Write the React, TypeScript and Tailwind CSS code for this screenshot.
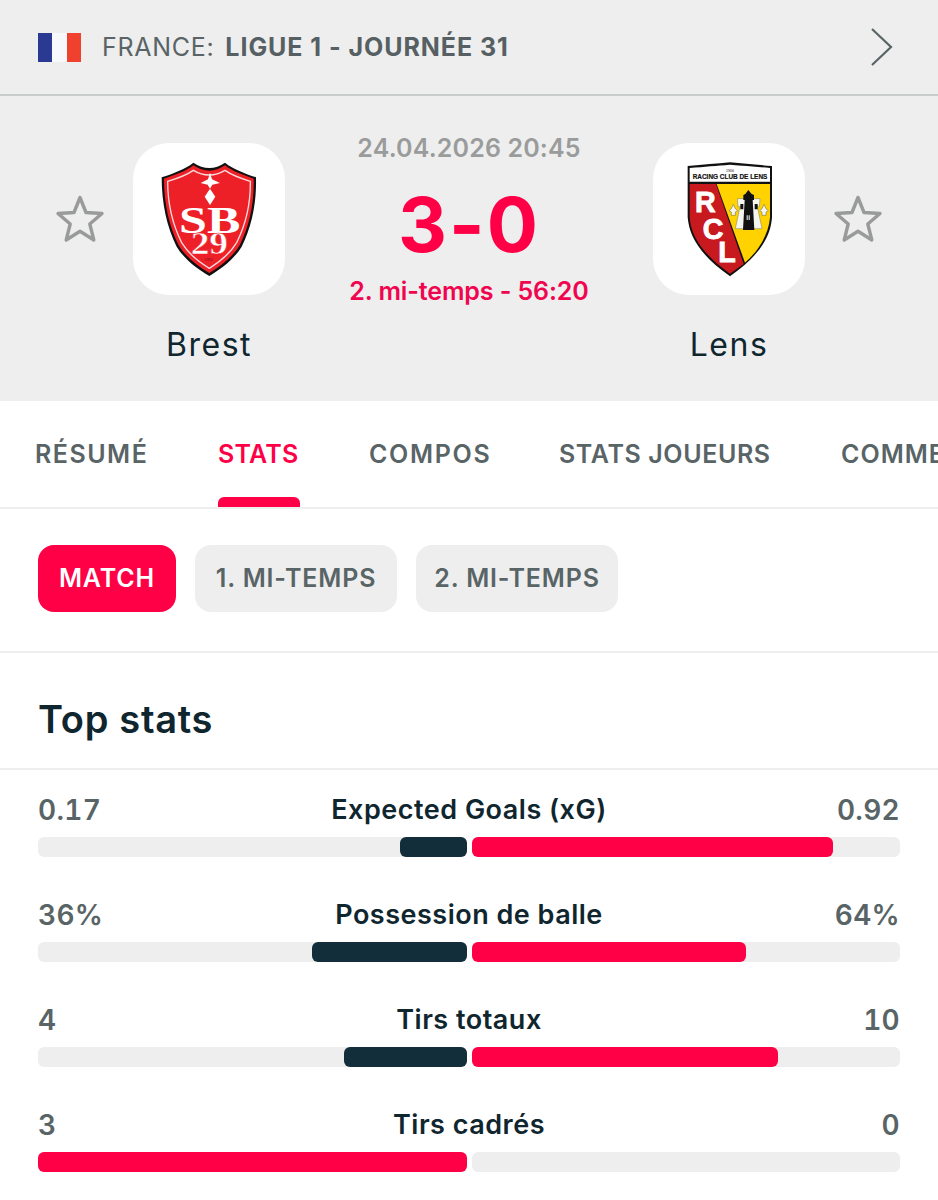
import React, { FC } from "react";

type Stat = {
  label: string;
  left: string;
  right: string;
  leftPct: number;
  rightPct: number;
  leftColor: string;
};

const stats: Stat[] = [
  { label: "Expected Goals (xG)", left: "0.17", right: "0.92", leftPct: 15.6, rightPct: 84.4, leftColor: "bg-[#122e3a]" },
  { label: "Possession de balle", left: "36%", right: "64%", leftPct: 36, rightPct: 64, leftColor: "bg-[#122e3a]" },
  { label: "Tirs totaux", left: "4", right: "10", leftPct: 28.5, rightPct: 71.5, leftColor: "bg-[#122e3a]" },
  { label: "Tirs cadrés", left: "3", right: "0", leftPct: 100, rightPct: 0, leftColor: "bg-[#ff0046]" },
];

const tabs = [
  { name: "RÉSUMÉ", cls: "w-[113px] mr-[70px] tracking-[1.5px] text-[#596466]" },
  { name: "STATS", cls: "w-[82px] mr-[69px] tracking-[0.2px] text-[#ff0046]" },
  { name: "COMPOS", cls: "w-[122px] mr-[68px] tracking-[1.7px] text-[#596466]" },
  { name: "STATS JOUEURS", cls: "w-[212px] mr-[70px] tracking-[0.6px] text-[#596466]" },
  { name: "COMMENTAIRES", cls: "tracking-[1px] text-[#596466]" },
];

const Star: FC = () => (
  <svg width="50" height="50" viewBox="0 0 50 50" fill="none" className="shrink-0">
    <path
      d="M25 3.5 L31 18.5 L47 19.5 L34.8 30 L38.8 46 L25 37.2 L11.2 46 L15.2 30 L3 19.5 L19 18.5 Z"
      stroke="#999b9b"
      strokeWidth="3.4"
      strokeLinejoin="round"
    />
  </svg>
);

const BrestLogo: FC = () => (
  <svg width="152" height="152" viewBox="9 9 456 456">
    <path
      d="M95 112 C130 100 165 88 190 68 C205 78 222 84 238 84 C254 84 270 78 285 68 C310 88 345 100 378 112 C380 190 365 260 335 320 C310 360 275 385 238 408 C200 385 165 360 140 320 C110 260 95 190 95 112 Z"
      fill="#111"
    />
    <path
      d="M102 116 C135 105 168 94 190 76 C205 86 222 92 238 92 C254 92 270 86 285 76 C307 94 340 105 371 116 C373 190 358 258 329 316 C305 354 272 378 238 399 C203 378 170 354 146 316 C117 258 102 190 102 116 Z"
      fill="#ee2027"
    />
    <path
      d="M113 124 C140 116 170 105 190 91 C205 100 222 105 238 105 C254 105 270 100 285 91 C305 105 335 116 361 124 C362 190 348 252 320 308 C298 345 268 366 238 385 C207 366 177 345 155 308 C127 252 113 190 113 124 Z"
      fill="none"
      stroke="#fbdcdc"
      strokeWidth="4"
    />
    <path
      d="M240 98 L246 118 L270 129 L247 134 L240 146 L233 134 L212 129 L234 118 Z M240 146 L256 170 L240 195 L224 170 Z"
      fill="#fff"
    />
    <text x="239" y="280" textAnchor="middle" fill="#fff" fontFamily="'Liberation Serif', serif" fontWeight="700" fontSize="112" textLength="184" lengthAdjust="spacingAndGlyphs">
      SB
    </text>
    <text x="238" y="342" textAnchor="middle" fill="#fff" stroke="#ee2027" strokeWidth="1.5" fontFamily="'Liberation Serif', serif" fontWeight="700" fontSize="96" textLength="112" lengthAdjust="spacingAndGlyphs">
      29
    </text>
    <text x="236" y="364" textAnchor="middle" fill="#7a1015" fontFamily="'Liberation Sans', sans-serif" fontSize="11">
      1950
    </text>
  </svg>
);

const LensLogo: FC = () => (
  <svg width="152" height="152" viewBox="9 9 456 456">
    <path
      d="M113 78 C160 74 200 71 240 67 C280 71 320 74 366 78 L366 232 C362 290 330 345 240 409 C150 345 118 290 113 232 Z"
      fill="#111"
    />
    <path d="M119 84 C165 80 200 77 240 74 C280 77 315 80 360 84 L360 125 L119 125 Z" fill="#fff" />
    <path d="M200 132 L360 132 L360 232 C356 282 328 330 285 368 Z" fill="#ffd200" />
    <path d="M119 132 L198 132 L281 372 L240 401 C155 340 123 288 119 232 Z" fill="#c8191f" />
    <text x="240" y="95" textAnchor="middle" fill="#222" fontFamily="'Liberation Sans', sans-serif" fontSize="11">
      1906
    </text>
    <text x="240" y="118" textAnchor="middle" fill="#111" stroke="#111" strokeWidth="0.6" fontFamily="'Liberation Sans', sans-serif" fontWeight="700" fontSize="22" textLength="224" lengthAdjust="spacingAndGlyphs">
      RACING CLUB DE LENS
    </text>
    <g fill="#fff" stroke="#fff" strokeWidth="2.5" fontFamily="'Liberation Sans', sans-serif" fontWeight="700">
      <text x="166" y="216" textAnchor="middle" fontSize="86">R</text>
      <text x="189" y="296" textAnchor="middle" fontSize="86">C</text>
      <text x="231" y="365" textAnchor="middle" fontSize="86">L</text>
    </g>
    <path d="M262 176 L330 176 L328 200 L322 200 L336 266 L256 266 L270 200 L264 200 Z" fill="#f6f6f0" stroke="#77775c" strokeWidth="1.5" />
    <path d="M295 150 L305 162 L312 165 L312 180 L308 180 L313 270 L279 270 L284 180 L280 180 L280 165 L286 162 Z" fill="#111" />
    <path d="M290 226 h3 v14 h-3 Z M296 226 h3 v14 h-3 Z" fill="#fff" />
    <path d="M271 192 h9 v16 h-9 Z M314 192 h9 v16 h-9 Z" fill="#111" />
    <path d="M250 193 L256 206 L263 212 L256 216 L256 226 L244 226 L244 216 L237 212 L244 206 Z M342 193 L348 206 L355 212 L348 216 L348 226 L336 226 L336 216 L329 212 L336 206 Z" fill="#f6f6f0" stroke="#5f5f45" strokeWidth="1.5" />
  </svg>
);

const TeamLogoBox: FC<{ children: React.ReactNode }> = ({ children }) => (
  <div className="w-[152px] h-[152px] rounded-[36px] bg-white shrink-0">{children}</div>
);

const StatRow: FC<{ stat: Stat }> = ({ stat }) => (
  <div className="h-[105px]">
    <div className="grid grid-cols-[1fr_auto_1fr] items-center h-[38px] font-semibold text-[#596466]">
      <span className="text-[28px] tracking-[0.3px] tabular-nums">{stat.left}</span>
      <span className="text-[27px] tracking-[0.5px] text-[#10262f]">{stat.label}</span>
      <span className="text-[28px] tracking-[0.3px] tabular-nums text-right">{stat.right}</span>
    </div>
    <div className="mt-[10px] flex gap-[5px] h-[20px]">
      <div className="flex-1 flex justify-end rounded-[6px] bg-[#eeeeee]">
        <div className={`${stat.leftColor} rounded-[6px] h-full`} style={{ width: `${stat.leftPct}%` }} />
      </div>
      <div className="flex-1 rounded-[6px] bg-[#eeeeee]">
        <div className="bg-[#ff0046] rounded-[6px] h-full" style={{ width: `${stat.rightPct}%` }} />
      </div>
    </div>
  </div>
);

const App: FC = () => {
  return (
    <div className="w-[938px] h-[1200px] overflow-hidden bg-white font-['Inter',sans-serif]">
      <div className="h-[96px] bg-[#eeeeee] border-b-2 border-[#c9cccc] flex items-center pl-[38px] pr-[44px]">
        <div className="flex w-[43px] h-[29px] shrink-0">
          <div className="flex-1 bg-[#2a3a92]" />
          <div className="flex-1 bg-[#f7f8fb]" />
          <div className="flex-1 bg-[#f0402e]" />
        </div>
        <span className="ml-[21px] pt-[1px] text-[25px] tracking-[0.7px] text-[#5a6466]">FRANCE:</span>
        <span className="ml-[11px] pt-[1px] text-[25px] font-bold tracking-[0.95px] text-[#566063]">LIGUE 1 - JOURNÉE 31</span>
        <svg width="24" height="40" viewBox="0 0 24 40" fill="none" className="ml-auto">
          <path d="M2 2 L21 20 L2 38" stroke="#596466" strokeWidth="2.2" />
        </svg>
      </div>

      <div className="h-[305px] bg-[#eeeeee] pt-[47px] flex justify-center">
        <div className="flex items-start gap-[28px] w-[828px]">
          <div className="mt-[51px]">
            <Star />
          </div>
          <div className="flex flex-col items-center w-[152px]">
            <TeamLogoBox>
              <BrestLogo />
            </TeamLogoBox>
            <span className="mt-[29px] text-[32px] leading-[42px] tracking-[1.5px] text-[#10262f]">Brest</span>
          </div>
          <div className="flex-1 flex flex-col items-center -mt-[13px]">
            <span className="text-[25px] leading-[36px] font-semibold tracking-[0.15px] text-[#9a9c9c]">24.04.2026 20:45</span>
            <span className="mt-[12px] text-[76px] leading-[92px] font-bold tracking-[2px] text-[#ff0046]">3-0</span>
            <span className="mt-[3px] text-[25px] leading-[36px] font-semibold -tracking-[0.1px] text-[#f0054f]">2. mi-temps - 56:20</span>
          </div>
          <div className="flex flex-col items-center w-[152px]">
            <TeamLogoBox>
              <LensLogo />
            </TeamLogoBox>
            <span className="mt-[29px] text-[32px] leading-[42px] tracking-[1.5px] text-[#10262f]">Lens</span>
          </div>
          <div className="mt-[51px]">
            <Star />
          </div>
        </div>
      </div>

      <div className="h-[108px] border-b-2 border-[#eeeeee] flex pl-[35px] overflow-hidden whitespace-nowrap">
        {tabs.map((tab) => (
          <div key={tab.name} className={`relative h-full flex items-center pt-[2px] shrink-0 text-[25px] font-semibold ${tab.cls}`}>
            <span>{tab.name}</span>
            {tab.name === "STATS" && (
              <div className="absolute left-0 right-0 bottom-0 h-[10px] rounded-t-[6px] bg-[#ff0046]" />
            )}
          </div>
        ))}
      </div>

      <div className="h-[144px] border-b-2 border-[#eeeeee] flex gap-[19px] pl-[38px] pt-[36px] text-[25px] font-semibold tracking-[0.85px]">
        <div className="w-[138px] h-[67px] flex items-center justify-center rounded-[16px] bg-[#ff0046] text-white">MATCH</div>
        <div className="w-[202px] h-[67px] flex items-center justify-center rounded-[16px] bg-[#eeeeee] text-[#596466]">1. MI-TEMPS</div>
        <div className="w-[202px] h-[67px] flex items-center justify-center rounded-[16px] bg-[#eeeeee] text-[#596466]">2. MI-TEMPS</div>
      </div>

      <div className="h-[117px] border-b-2 border-[#eeeeee] flex items-center pl-[38px] pt-[18px]">
        <h2 className="text-[38px] font-semibold tracking-[0.7px] text-[#10262f]">Top stats</h2>
      </div>

      <div className="pl-[38px] pr-[38px] pt-[19px]">
        {stats.map((stat) => (
          <StatRow key={stat.label} stat={stat} />
        ))}
      </div>
    </div>
  );
};

export default App;
